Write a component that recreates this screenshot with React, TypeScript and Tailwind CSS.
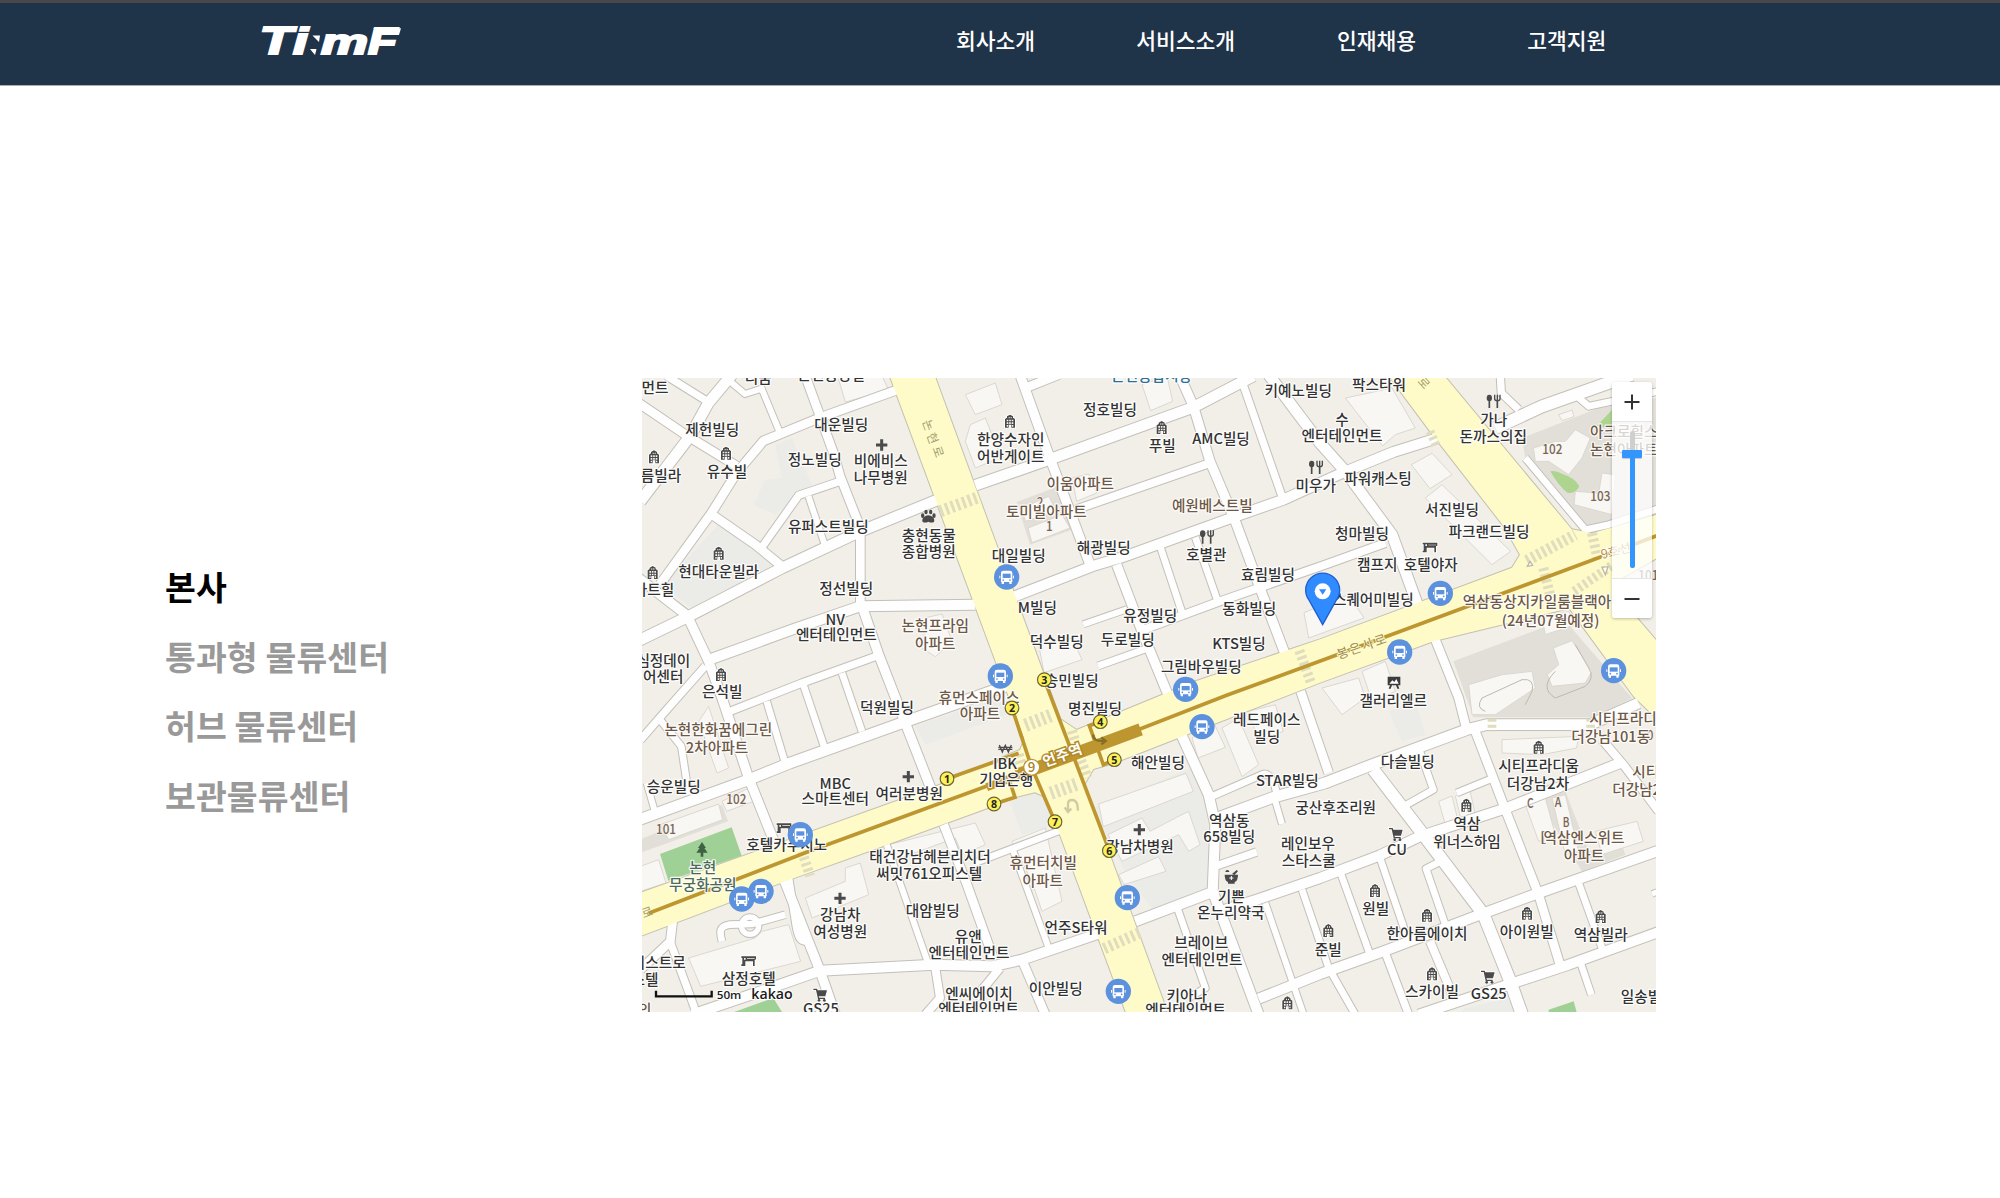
import React from "react";

const NAV = ["회사소개", "서비스소개", "인재채용", "고객지원"];
const NAV_GAPS = ["", "ml-[101px]", "ml-[102px]", "ml-[111px]"];
const PLACES = ["본사", "통과형 물류센터", "허브 물류센터", "보관물류센터"];

const KR = '"Noto Sans CJK KR", "Noto Sans", sans-serif';

// Side streets: [path, width]
const STREETS: [string, number][] = [
  ["M-10 75L130 170L284 264", 26],
  ["M74 -6L199 72", 22],
  ["M270 -10L199 75L144 175L-5 370", 32],
  ["M264 10L309 48L359 32L414 165", 18],
  ["M490 -6L534 114L574 224L594 294L655 450L655 680", 26],
  ["M770 34L534 119L364 189L284 284L209 404L54 619", 26],
  ["M594 310L470 352L358 510", 22],
  ["M499 354L548 500", 18],
  ["M209 409L340 500L420 565", 26],
  ["M-10 788L140 715L420 570L655 460L890 364", 32],
  ["M1000 322L1224 244L1654 88L1834 -6", 32],
  ["M-10 600L135 712L200 850L240 960L320 1200L424 1460", 28],
  ["M424 1500L534 1778L580 1910", 28],
  ["M190 864L54 1018L-5 1086", 22],
  ["M50 1020L118 1105L140 1250", 20],
  ["M199 846L450 755L654 685L1000 680", 30],
  ["M660 684L710 830L784 1020L868 1235", 28],
  ["M905 1340L975 1520L1054 1740", 26],
  ["M710 832L480 915L264 1000", 22],
  ["M374 970L428 1150", 20],
  ["M484 920L548 1110", 20],
  ["M600 885L660 1060", 20],
  ["M1090 925L794 1030L444 1155L320 1205L-5 1324", 32],
  ["M14 1215L40 1305", 18],
  ["M92 1630L85 1690L-5 1775", 26],
  ["M84 1690L165 1910", 22],
  ["M150 1910L370 1835L534 1778L874 1760L1050 1765L1140 1745L1390 1660", 30],
  ["M1480 1630L1704 1545", 30],
  ["M1734 1600L1844 1565L2034 1500L2214 1432L2334 1375L2594 1290L2934 1155", 30],
  ["M880 1770L894 1860L850 1910", 24],
  ["M240 1690C232 1660 232 1645 262 1640L330 1638L430 1610", 20],
  ["M440 1500L462 1640C470 1690 480 1690 500 1690", 22],
  ["M734 1400L858 1755", 18],
  ["M1000 1454L1274 1350", 20],
  ["M1114 1420L1220 1710", 18],
  ["M1144 1755L1210 1910", 26],
  ["M1074 1770L1000 1860", 24],
  ["M1618 1070L1700 1250L1720 1340L1712 1540L1850 1910", 30],
  ["M1704 1258L1864 1188Q1890 1184 1904 1245", 20],
  ["M1726 1320L1894 1258L2049 1215L2190 1160L2474 1055L2534 1040L2844 1040L2990 975", 32],
  ["M1900 1270L1920 1338", 18],
  ["M1720 1465L1844 1422", 22],
  ["M1606 1590L1690 1830L1640 1860", 20],
  ["M1870 1575L1985 1910", 18],
  ["M1980 1535L2060 1770L2140 1910", 20],
  ["M1850 1862L2034 1788L2224 1720L2500 1615L2690 1545L3050 1418", 30],
  ["M1976 940L2060 1185", 26],
  ["M2374 770L2450 960L2474 1055", 26],
  ["M2500 1060L2590 1295L2690 1550L2754 1760", 26],
  ["M2194 1175L2344 1370L2524 1608L2604 1808L2640 1910", 36],
  ["M2330 1110L2374 1235L2294 1280", 20],
  ["M2444 1245L2554 1200", 20],
  ["M2094 1480L2184 1730", 20],
  ["M2230 1725L2300 1910", 22],
  ["M2214 1440L2296 1680", 20],
  ["M2396 1450L2352 1472L2410 1640", 20],
  ["M2364 1690L2440 1870", 24],
  ["M2330 1910L2614 1815L2780 1760L3050 1662", 30],
  ["M2810 1515L2880 1710", 20],
  ["M2816 1755L2848 1850", 20],
  ["M2880 1085L2944 1160L3050 1300", 24],
  ["M3030 1548L3050 1540", 16],
  ["M1134 -10L1220 230L1344 560", 28],
  ["M1150 30L1250 -10", 26],
  ["M1110 658L1350 565L1440 538L1754 425L1924 365L2100 285L2254 222L2400 176", 30],
  ["M1300 395L1704 255", 24],
  ["M1614 -6L1654 84L1704 250L1780 430L1854 630L1930 830", 28],
  ["M1800 10L1920 355", 22],
  ["M1880 -10L2034 195L2110 280L2250 470L2330 690", 32],
  ["M1424 560L1504 770L1580 955", 28],
  ["M1324 739L1454 694", 18],
  ["M1368 864L1514 812", 20],
  ["M1554 504L1624 715", 20],
  ["M1660 478L1728 672", 20],
  ["M1504 755L1734 670L2049 560L2230 495", 24],
  ["M2560 150L2700 85L2870 25L2970 -10", 36],
  ["M2575 -6L2578 45L2630 95", 22],
  ["M2800 50L2840 85L3050 40", 20],
  ["M2650 240L2830 455L2900 440L3050 392", 20],
];

// Arterial roads, outlined and filled separately so that crossings merge
const ARTERIES = [
  "M744 -4L1454 1910H1579L879 -4Z",
  "M-9 1546L864 1233L1104 1128L1134 1116L1149 1081L1259 1026L1304 1056L1654 912L2034 784L2610 569L2634 530L2600 470L2789 454L2850 466L3052 408V536L2784 690L2374 790L2034 914L1614 1078L1414 1156L1354 1173L1329 1216L1225 1296L1204 1254L1179 1243L1124 1256L1029 1293L714 1408L434 1508L-9 1676Z",
  "M2242 -4L2364 160L2632 505L2784 694L2974 954L3052 1030V798L2954 684L2820 480L2789 454L2409 -4Z",
];

const BUILDINGS = [
  "M590 5L610 72L740 36L720 -6L600 -6Z",
  "M970 50L1060 15L1080 80L1000 110Z",
  "M985 140L1030 120L1070 220L1050 250L1000 270L970 190Z",
  "M1500 20L1575 -6L1592 70L1526 98Z",
  "M1290 300L1340 288L1364 345L1304 370Z",
  "M1140 390L1220 355L1244 400L1150 430Z",
  "M1158 450L1260 410L1284 450L1170 494Z",
  "M855 718L900 708L930 790L880 836L840 810Z",
  "M1190 800L1290 780L1320 845L1206 884Z",
  "M1986 704L2120 650L2166 720L2000 780Z",
  "M2110 60L2250 30L2320 150L2260 170L2222 204Z",
  "M2308 260L2370 226L2430 290L2364 332Z",
  "M2350 360L2400 320L2606 520L2550 560Z",
  "M2674 210L2740 190L2770 190L2800 155L2845 180L2820 240L2780 290L2720 250L2680 250Z",
  "M2800 340L2870 345L2880 285L2920 290L2910 410L2796 380Z",
  "M2750 110L2790 96L2796 116L2760 128Z",
  "M1370 1278L1632 1186L1654 1240L1384 1346Z",
  "M1398 1370L1500 1320L1524 1360L1604 1318L1640 1300L1674 1400L1640 1420L1610 1370L1440 1450Z",
  "M1430 1490L1550 1436L1572 1480L1446 1520Z",
  "M1650 1080L1716 1036L1750 1108L1668 1140Z",
  "M1740 1050L1790 1020L1850 1160L1800 1196Z",
  "M1820 1000L1900 980L1924 1060L1850 1090Z",
  "M140 1740L340 1680L360 1660L440 1640L476 1750L176 1825Z",
  "M490 1560L610 1510L610 1470L655 1455L680 1550L510 1620Z",
  "M55 1340L230 1278L242 1325L80 1385Z",
  "M200 985L260 1170L225 1185L170 1030Z",
  "M240 1270L320 1230L334 1270L254 1300Z",
  "M-5 1465L50 1445L72 1515L-5 1540Z",
  "M740 1400L1000 1335L1030 1400L960 1430L940 1380L750 1450Z",
  "M1110 1390L1210 1350L1260 1570L1200 1600L1180 1540L1150 1470Z",
  "M2580 1085L2810 1075L2804 1110L2700 1130L2580 1125Z",
  "M2390 1270L2430 1254L2446 1320L2410 1340Z",
  "M2440 1254L2484 1238L2500 1310L2456 1320Z",
  "M2650 1280L2710 1260L2740 1370L2690 1390Z",
  "M2730 1260L2770 1250L2810 1420L2770 1430Z",
  "M2860 1360L2985 1330L3004 1390L2880 1430Z",
  "M2160 880L2230 850L2260 940L2190 970Z",
  "M2040 930L2150 900L2170 960L2100 1010Z",
  "M2480 920L2580 890L2670 880L2680 930L2560 1010L2490 1010Z",
  "M2734 810L2790 788L2850 880L2830 915L2730 925L2716 890L2750 860Z",
  "M2700 720L2780 700L2800 740L2710 770Z",
];

type Tone = "k" | "b" | "g" | "t";
const TONES: Record<Tone, string> = { k: "#333333", b: "#6e5846", g: "#4c6a55", t: "#2f6f93" };

// Centred place names: [x, y, text, tone]
const LABELS: [number, number, string, Tone?][] = [
  [39, 29, "먼트"], [349, 0, "리움"], [568, -11, "논현중앙빌"],
  [211, 154, "제헌빌딩"], [255, 280, "유수빌"], [57, 292, "름빌라"],
  [598, 140, "대운빌딩"], [518, 245, "정노빌딩"],
  [716, 249, "비에비스"], [716, 299, "나무병원"],
  [559, 447, "유퍼스트빌딩"], [860, 472, "충현동물"], [860, 522, "종합병원"],
  [230, 581, "현대타운빌라"], [36, 636, "아트힐"], [613, 631, "정선빌딩"],
  [580, 726, "NV"], [583, 770, "엔터테인먼트"],
  [880, 744, "논현프라임", "b"], [880, 796, "아파트", "b"],
  [64, 849, "심정데이"], [64, 896, "어센터"], [241, 942, "은석빌"],
  [1529, -6, "논현종합시장", "t"], [1404, 95, "정호빌딩"], [1561, 204, "푸빌"],
  [1737, 183, "AMC빌딩"], [1969, 39, "키예노빌딩"],
  [1106, 184, "한양수자인"], [1106, 236, "어반게이트"],
  [1315, 318, "이움아파트", "b"], [1213, 400, "토미빌아파트", "b"],
  [1711, 383, "예원베스트빌", "b"], [1385, 509, "해광빌딩"], [1130, 532, "대일빌딩"],
  [1693, 531, "호별관"], [1878, 589, "효림빌딩"], [1186, 688, "M빌딩"],
  [1525, 713, "유정빌딩"], [1822, 691, "동화빌딩"], [1244, 790, "덕수빌딩"],
  [1457, 786, "두로빌딩"], [1791, 798, "KTS빌딩"], [1678, 866, "그림바우빌딩"],
  [1289, 908, "승민빌딩"], [2021, 322, "미우가"],
  [2211, 21, "팍스타워"], [2100, 124, "수"], [2100, 174, "엔터테인먼트"],
  [2555, 124, "가나"], [2554, 176, "돈까스의집"],
  [2945, 162, "아크로힐스", "b"], [2945, 214, "논현아파트", "b"],
  [2208, 302, "파워캐스팅"], [2430, 395, "서진빌딩"], [2541, 462, "파크랜드빌딩"],
  [2160, 466, "청마빌딩"], [2206, 559, "캠프지"], [2366, 561, "호텔야자"],
  [2194, 664, "스퀘어미빌딩"], [2685, 672, "역삼동상지카일룸블랙아", "b"],
  [2726, 729, "(24년07월예정)", "b"], [2254, 968, "갤러리엘르"],
  [229, 1056, "논현한화꿈에그린", "b"], [225, 1108, "2차아파트", "b"],
  [735, 990, "덕원빌딩"], [95, 1226, "승운빌딩"],
  [580, 1216, "MBC"], [580, 1262, "스마트센터"], [802, 1246, "여러분병원"],
  [182, 1469, "논현", "g"], [182, 1520, "무궁화공원", "g"], [434, 1401, "호텔카푸치노"],
  [864, 1436, "태건강남헤븐리치더"], [862, 1486, "써밋761오피스텔"], [872, 1599, "대암빌딩"],
  [595, 1610, "강남차"], [595, 1660, "여성병원"],
  [979, 1676, "유앤"], [981, 1724, "엔터테인먼트"],
  [50, 1754, "이스트로"], [9, 1804, "스텔"], [320, 1801, "삼정호텔"],
  [537, 1893, "GS25"], [8, 1896, "의", "b"],
  [1011, 1846, "엔씨에이치"], [1010, 1893, "엔터테인먼트"],
  [1011, 960, "휴먼스페이스", "b"], [1014, 1008, "아파트", "b"],
  [1359, 991, "명진빌딩"], [1874, 1025, "레드페이스"], [1874, 1075, "빌딩"],
  [1089, 1158, "IBK"], [1093, 1205, "기업은행"], [1548, 1154, "해안빌딩"],
  [1936, 1208, "STAR빌딩"], [2081, 1288, "궁산후조리원"],
  [1762, 1327, "역삼동"], [1762, 1375, "658빌딩"],
  [1998, 1398, "레인보우"], [2000, 1447, "스타스쿨"], [1494, 1405, "강남차병원"],
  [1204, 1455, "휴먼터치빌", "b"], [1202, 1508, "아파트", "b"],
  [1768, 1555, "기쁜"], [1766, 1604, "온누리약국"], [1302, 1649, "언주S타워"],
  [1678, 1695, "브레이브"], [1680, 1745, "엔터테인먼트"], [1241, 1831, "이안빌딩"],
  [1634, 1853, "키아나"], [1631, 1896, "엔터테인먼트"], [2059, 1716, "준빌"],
  [2963, 1022, "시티프라디움", "b"], [2906, 1076, "더강남101동", "b"],
  [2297, 1151, "다슬빌딩"], [2690, 1162, "시티프라디움"], [2688, 1216, "더강남2차"],
  [3092, 1182, "시티프라디움", "b"], [3004, 1235, "더강남2차", "b"],
  [2475, 1337, "역삼"], [2475, 1390, "위너스하임"],
  [2826, 1378, "역삼엔스위트", "b"], [2826, 1432, "아파트", "b"],
  [2265, 1416, "CU"], [2201, 1591, "원빌"], [2355, 1668, "한아름에이치"],
  [2654, 1661, "아이원빌"], [2876, 1670, "역삼빌라"], [2370, 1842, "스카이빌"],
  [2540, 1848, "GS25"], [3017, 1856, "일송빌딩"],
];

// House and block numbers
const NUMBERS: [number, number, string][] = [
  [1194, 372, "2"], [1222, 444, "1"], [2731, 213, "102"], [2875, 353, "103"],
  [3019, 591, "101"], [283, 1263, "102"], [72, 1353, "101"],
  [2665, 1276, "C"], [2748, 1271, "A"], [2772, 1333, "B"], [2703, 1378, "["], [3024, 1072, "0"],
];

const APARTMENTS: [number, number][] = [
  [252, 226], [36, 237], [230, 526], [32, 584], [237, 890], [1559, 149], [1104, 130],
  [2690, 1108], [2473, 1282], [2199, 1538], [2355, 1612], [2655, 1606], [2876, 1616],
  [2370, 1788], [2059, 1658], [1936, 1875],
];
const HOSPITALS: [number, number][] = [[719, 201], [799, 1196], [594, 1561], [1492, 1355]];
const FOODS: [number, number][] = [[1694, 477], [2021, 268], [2554, 70]];
const HOTELS: [number, number][] = [[2364, 509], [426, 1351], [320, 1750]];
const SHOPS: [number, number][] = [[535, 1850], [2262, 1368], [2538, 1796]];
const BUSES: [number, number][] = [
  [1094, 597], [1075, 894], [1631, 934], [2395, 646], [2273, 822], [2915, 878],
  [475, 1370], [299, 1563], [357, 1540], [1680, 1046], [1456, 1559], [1429, 1840],
];
const EXITS: [number, number, number][] = [
  [915, 1202, 1], [1110, 990, 2], [1207, 905, 3], [1375, 1031, 4],
  [1417, 1145, 5], [1402, 1418, 6], [1239, 1331, 7], [1056, 1278, 8],
];
// Pedestrian crossings: start, end, stripe length
const CROSSINGS: [number, number, number, number, number][] = [
  [894, 400, 1014, 356, 36], [1150, 1042, 1232, 1010, 40], [1226, 1246, 1310, 1216, 40],
  [1386, 1712, 1494, 1664, 34], [2654, 548, 2800, 470, 34], [2796, 640, 2910, 562, 28],
  [1972, 818, 2008, 918, 30], [2704, 570, 2724, 650, 30], [2850, 465, 2866, 540, 30],
  [480, 1420, 504, 1494, 30], [2364, 160, 2384, 206, 26], [1290, 1058, 1300, 1090, 30], [1316, 1148, 1336, 1200, 32],
  [1128, 1130, 1144, 1180, 34], [2550, 1022, 2550, 1060, 26], [2846, 1022, 2846, 1060, 26],
];

function Apartment({ x, y }: { x: number; y: number }) {
  return (
    <g transform={`translate(${x} ${y})`}>
      <path d="M-15 19V-7L-9 -11V-15L0 -20L9 -15V-11L15 -7V19H4V10H-4V19Z" fill="#4a4a4a" stroke="#fff" strokeWidth="5" paintOrder="stroke" />
      <path d="M-10 -5h5v5h-5zM-2.5 -5h5v5h-5zM5 -5h5v5h-5zM-10 3h5v5h-5zM5 3h5v5h-5zM-2.5 3h5v5h-5zM-10 11h4v5h-4zM6 11h4v5h-4zM-4 -13h3v4h-3zM2 -13h3v4h-3z" fill="#f4f2ee" />
    </g>
  );
}

function Hotel({ x, y }: { x: number; y: number }) {
  return (
    <g transform={`translate(${x} ${y})`} fill="#4a4a4a">
      <path d="M-22 -15H22V-6L18 -4V14H13V0H-10V14H-22V9H-19V-10H-22Z" stroke="#fff" strokeWidth="5" paintOrder="stroke" />
      <path d="M-14 -10H-9V-5H-14ZM-5 -9H18V-7H-5Z" fill="#f4f2ee" />
    </g>
  );
}

function Food({ x, y }: { x: number; y: number }) {
  return (
    <g transform={`translate(${x} ${y})`} fill="none" stroke="#4a4a4a" strokeWidth="5">
      <ellipse cx="-12" cy="-10" rx="8" ry="10" fill="#4a4a4a" stroke="none" />
      <path d="M-12 -2V20M12 -2V20" />
      <path d="M4 -20V-8Q4 -2 12 -2Q20 -2 20 -8V-20M12 -20V-4" strokeWidth="4" />
    </g>
  );
}

function Shop({ x, y }: { x: number; y: number }) {
  return (
    <g transform={`translate(${x} ${y})`} fill="#4a4a4a">
      <path d="M-21 -18H-10L-8 -13H20L15 5H-5L-3 9H14V13H-7L-13 -14H-21Z" stroke="#fff" strokeWidth="5" paintOrder="stroke" />
      <circle cx="-4" cy="17" r="4" />
      <circle cx="12" cy="17" r="4" />
    </g>
  );
}

function Bus({ x, y }: { x: number; y: number }) {
  return (
    <g transform={`translate(${x} ${y})`}>
      <circle r="38" fill="#5c91de" />
      <path d="M-17 -12Q-17 -19 -10 -19H10Q17 -19 17 -12V15H15V21H8V15H-8V21H-15V15H-17Z" fill="#fff" />
      <path d="M-12 -10H12V3H-12Z" fill="#5c91de" />
      <circle cx="-10" cy="9" r="2.6" fill="#5c91de" />
      <circle cx="10" cy="9" r="2.6" fill="#5c91de" />
      <path d="M-20.500 -4V4M20.500 -4V4" stroke="#fff" strokeWidth="3" />
    </g>
  );
}

function OfficeMap() {
  return (
    <svg viewBox="0 0 3042 1902" width="1014" height="634" className="block" fontFamily={KR}>
      <rect width="3042" height="1902" fill="#f2efe9" />

      <g fill="#ebece7">
        <path d="M400 200L450 180L510 320L400 410L335 380L370 305L420 300Z" />
        <path d="M60 620L230 440L410 560L160 700Z" />
        <path d="M820 1045L1090 950L1120 1000L850 1100Z" />
        <path d="M1350 1290L1650 1170L1700 1300L1700 1530L1530 1590L1460 1500Z" />
        <path d="M1100 1260L1190 1240L1240 1340L1140 1370Z" />
        <path d="M2240 1000L2320 970L2350 1070L2280 1090Z" />
        <path d="M2470 1890L2600 1860L2620 1910H2450Z" />
      </g>
      <g fill="#e2dfd8">
        <path d="M2640 180L2870 90L3042 60V400L2900 440L2830 450L2650 240Z" />
        <path d="M2434 850L2700 750L2784 745L2970 960L2860 1018L2494 1018Z" />
        <path d="M-6 1385L240 1280L258 1330L-6 1425Z" />
        <path d="M1124 372L1250 325L1290 455L1164 500Z" />
        <path d="M2690 1270L2770 1240L2840 1420L2940 1400L2950 1430L2820 1480Z" />
      </g>
      <path d="M2725 280Q2740 276 2762 288Q2800 300 2812 325Q2800 350 2776 344Q2750 325 2725 280ZM2864 145L2910 95V150Z" fill="#add58f" />
      <path d="M54 1428L269 1348L299 1433L79 1508ZM254 1910L394 1860L425 1910ZM2720 1895L2795 1870L2806 1910H2720Z" fill="#9fd196" />

      <g fill="#f8f7f4" stroke="#dcd8d0" strokeWidth="3">
        {BUILDINGS.map((d) => <path key={d} d={d} />)}
      </g>
      <path d="M2530 1000Q2500 990 2520 960L2640 905Q2680 900 2670 940L2650 980" fill="none" stroke="#bdb9b1" strokeWidth="3" />
      <path d="M2740 880Q2690 930 2740 960L2830 925Q2860 900 2840 870L2800 800" fill="none" stroke="#bdb9b1" strokeWidth="3" />

      <g fill="none" stroke="#c3c0b9" strokeLinejoin="round">
        {STREETS.map(([d, w]) => <path key={d} d={d} strokeWidth={w + 6} />)}
        <circle cx="324" cy="1643" r="26" strokeWidth="22" />
      </g>
      <g fill="none" stroke="#c3c0b0" strokeWidth="6" strokeLinejoin="round">
        {ARTERIES.map((d) => <path key={d} d={d} />)}
      </g>
      <g fill="none" stroke="#fefefe" strokeLinejoin="round">
        {STREETS.map(([d, w]) => <path key={d} d={d} strokeWidth={w} />)}
        <circle cx="324" cy="1643" r="26" strokeWidth="16" />
      </g>
      <g fill="#fefbc9">
        {ARTERIES.map((d) => <path key={d} d={d} />)}
      </g>

      <g fill="none" stroke="#e0dcbe">
        {CROSSINGS.map(([x1, y1, x2, y2, w]) => (
          <line key={`${x1}-${y1}`} x1={x1} y1={y1} x2={x2} y2={y2} strokeWidth={w} strokeDasharray="9 9" />
        ))}
      </g>
      <g fill="#fff" stroke="#bdb9a8" strokeWidth="4">
        <path d="M2656 565L2664 550L2672 562ZM2880 568L2898 566L2890 590Z" />
      </g>
      <path d="M1278 1300V1278Q1278 1266 1290 1266Q1302 1266 1306 1280L1308 1298M1268 1288L1278 1302L1288 1292" fill="none" stroke="#d0cba4" strokeWidth="7" />

      <g fill="none" stroke="#bd962f" strokeWidth="11">
        <path d="M20 1606L494 1423L1029 1226L1494 1053L1754 952L2049 844L2884 534L3052 470" />
        <path d="M915 1202L1130 1126" />
        <path d="M1110 990L1169 1168L1239 1331" />
        <path d="M1207 905L1402 1418" />
        <path d="M1375 1031L1342 1043L1384 1160L1417 1145" />
        <path d="M1056 1278L1119 1258L1100 1200" />
        <path d="M1034 1228L1494 1053" strokeWidth="24" />
        <path d="M1124 1192L1496 1054" strokeWidth="38" />
      </g>
      <path d="M1354 1070Q1352 1092 1388 1088M1378 1078L1391 1089L1378 1099" fill="none" stroke="#846f28" strokeWidth="7" />

      <g fill="#a39e6e" fontSize="36" textAnchor="middle">
        <text transform="translate(850 145) rotate(70)" y="4">논</text>
        <text transform="translate(863 184) rotate(70)" y="4">현</text>
        <text transform="translate(880 224) rotate(70)" y="4">로</text>
        <text transform="translate(2342 18) rotate(48)" y="8">로</text>
        <text transform="translate(16 1604) rotate(-20)" y="12">로</text>
      </g>
      <text transform="translate(2159 806) rotate(-19)" y="13" fontSize="38" textAnchor="middle" textLength="154" fill="#9c8a50" stroke="#fefbc9" strokeWidth="5" paintOrder="stroke">봉은사로</text>
      <text transform="translate(2922 520) rotate(-14)" y="12" fontSize="38" textAnchor="middle" fill="#b98f31" stroke="#fff" strokeWidth="6" paintOrder="stroke">9호선</text>

      {APARTMENTS.map(([x, y]) => <Apartment key={`${x}-${y}`} x={x} y={y} />)}
      {HOTELS.map(([x, y]) => <Hotel key={`${x}-${y}`} x={x} y={y} />)}
      {FOODS.map(([x, y]) => <Food key={`${x}-${y}`} x={x} y={y} />)}
      {SHOPS.map(([x, y]) => <Shop key={`${x}-${y}`} x={x} y={y} />)}
      {HOSPITALS.map(([x, y]) => (
        <path key={`${x}-${y}`} d={`M${x - 17} ${y}H${x + 17}M${x} ${y - 17}V${y + 17}`} stroke="#4a4a4a" strokeWidth="9" />
      ))}
      <g fill="#4a4a4a">
        <path d="M859 412C872 412 880 424 876 432Q868 436 859 431Q850 436 842 432C838 424 846 412 859 412Z" />
        <ellipse cx="842" cy="413" rx="5" ry="7" />
        <ellipse cx="852" cy="402" rx="5" ry="7" />
        <ellipse cx="866" cy="402" rx="5" ry="7" />
        <ellipse cx="876" cy="413" rx="5" ry="7" />
      </g>
      <path d="M1072 1101L1081 1122L1090 1102L1099 1122L1108 1101M1069 1108H1111M1069 1114H1111" fill="none" stroke="#4a4a4a" strokeWidth="4" />
      <path d="M1748 1490H1788Q1788 1508 1778 1512V1517H1758V1512Q1748 1508 1748 1490ZM1770 1488L1784 1476L1788 1480L1778 1490ZM1750 1482A6 6 0 0 1 1762 1482Z" fill="#4a4a4a" />
      <path d="M1762 1500H1774M1768 1494V1506" stroke="#fff" strokeWidth="3" />
      <path d="M2237 896H2275V922H2237ZM2244 922H2250L2246 932H2240ZM2262 922H2268L2272 932H2266Z" fill="#3c3c3c" />
      <path d="M2242 917L2251 907L2257 912L2263 903L2270 917Z" fill="#fff" />
      <path d="M180 1392L192 1410H187L197 1424H184V1436H176V1424H163L173 1410H168Z" fill="#3f6144" />

      <g fontSize="41" fontWeight="500" textAnchor="middle" fill="#7a6656" stroke="#f7f5f0" strokeWidth="5" paintOrder="stroke">
        {NUMBERS.map(([x, y, t]) => <text key={`${x}-${y}`} x={x} y={y + 15} textLength={t.length * 20} lengthAdjust="spacingAndGlyphs">{t}</text>)}
      </g>
      <g fontSize="44" fontWeight="500" textAnchor="middle" stroke="#ffffff" strokeOpacity="0.9" strokeWidth="7" strokeLinejoin="round" paintOrder="stroke">
        {LABELS.map(([x, y, t, c]) => <text key={`${x}-${y}`} x={x} y={y + 16} fill={TONES[c ?? "k"]}>{t}</text>)}
      </g>

      {BUSES.map(([x, y]) => <Bus key={`${x}-${y}`} x={x} y={y} />)}
      {EXITS.map(([x, y, n]) => (
        <g key={n}>
          <circle cx={x} cy={y} r="20.500" fill="#fdf155" stroke="#6b6535" strokeWidth="3.500" />
          <text x={x} y={y + 11.500} fontSize="32" fontWeight="700" textAnchor="middle" fill="#222" fontFamily='"Open Sans", sans-serif'>{n}</text>
        </g>
      ))}
      <circle cx="1169" cy="1168" r="24" fill="#fff" stroke="#bd962f" strokeWidth="4" />
      <text x="1169" y="1183" fontSize="40" fontWeight="500" textAnchor="middle" fill="#a98426">9</text>
      <text transform="translate(1261 1131) rotate(-20)" y="16" fontSize="43" fontWeight="700" textAnchor="middle" textLength="122" fill="#fff" stroke="#b08a2a" strokeWidth="9" paintOrder="stroke">언주역</text>

      <path d="M2042 740L2002 668A51 51 0 1 1 2082 668Z" fill="#2f8bff" stroke="#1f5fd0" strokeWidth="4" />
      <circle cx="2042" cy="640" r="24" fill="#fff" />
      <path d="M2031 634H2053L2042 650Z" fill="#2f8bff" />

      <path d="M42 1838V1855H209V1838" fill="none" stroke="#111" strokeWidth="7" />
      <g fontFamily='"Open Sans", sans-serif' fontWeight="600" fill="#1c1c1c" stroke="#fff" strokeWidth="6" paintOrder="stroke">
        <text x="224" y="1864" fontSize="34" textLength="74" lengthAdjust="spacingAndGlyphs">50m</text>
        <text x="328" y="1864" fontSize="44" textLength="124" lengthAdjust="spacingAndGlyphs">kakao</text>
      </g>
    </svg>
  );
}

function ZoomControl() {
  return (
    <div className="absolute right-[4px] top-[4px] flex h-[236px] w-10 flex-col overflow-hidden rounded-[3px] shadow-[0_1px_3px_rgba(0,0,0,0.25)]">
      <button className="flex h-10 items-center justify-center border-b border-[#e6e6e6] bg-white" aria-label="확대">
        <svg width="16" height="16" viewBox="0 0 16 16"><path d="M8 .5V15.5M.5 8H15.5" stroke="#333" strokeWidth="2" /></svg>
      </button>
      <div className="flex flex-1 flex-col items-center bg-white/75 pt-[9px]">
        <div className="h-[19px] w-[5px] rounded-t-full bg-[#cfcfcf]" />
        <div className="h-2 w-5 rounded-[1px] bg-[#3396ff] shadow-[0_1px_1px_rgba(0,0,0,0.2)]" />
        <div className="h-[110px] w-[5px] rounded-b-[2px] bg-[#3396ff]" />
      </div>
      <button className="flex h-10 items-center justify-center border-t border-[#e6e6e6] bg-white" aria-label="축소">
        <svg width="16" height="16" viewBox="0 0 16 16"><path d="M.5 8H15.5" stroke="#333" strokeWidth="2" /></svg>
      </button>
    </div>
  );
}

function Logo() {
  return (
    <svg width="142" height="32" viewBox="0 0 142 32" className="block" fill="#fff" stroke="#fff" strokeWidth="2" fontFamily='"Liberation Sans", Arial, sans-serif' fontWeight="700" fontStyle="italic">
      <text x="-1.500" y="29.300" fontSize="38.5" textLength="33" lengthAdjust="spacingAndGlyphs">T</text>
      <text x="32" y="29.300" fontSize="36.500" textLength="15" lengthAdjust="spacingAndGlyphs">i</text>
      <path d="M51.5 10.5H59L58 17ZM49 24H55.5L54 30Z" stroke="none" />
      <text x="60" y="29.300" fontSize="35" textLength="47" lengthAdjust="spacingAndGlyphs">m</text>
      <text x="107" y="29.300" fontSize="36" textLength="29" lengthAdjust="spacingAndGlyphs">F</text>
      <path d="M112 3.200H140L138 10H121Z" stroke="none" />
    </svg>
  );
}

export default function App() {
  return (
    <div className="h-[1198px] w-[2000px] overflow-hidden bg-white font-['Noto_Sans_CJK_KR','Noto_Sans',sans-serif]">
      <header className="flex h-[86px] items-start border-b border-t-[3px] border-b-[#a9adbd] border-t-[#48484a] bg-[#1f3349] pl-[261px]">
        <div className="mt-[22px] w-[142px]"><Logo /></div>
        <nav className="ml-[553px] mt-[21px] flex h-8 items-center text-[21.5px] font-medium text-white">
          {NAV.map((item, i) => <a key={item} href="#" className={`whitespace-nowrap leading-8 ${NAV_GAPS[i]}`}>{item}</a>)}
        </nav>
      </header>
      <main className="flex pt-[292px]">
        <ul className="w-[642px] shrink-0 pl-[165px] pt-[173px] text-[33.5px] font-bold leading-[69.700px] tracking-[0.1px] text-[#999]">
          {PLACES.map((p, i) => (
            <li key={p} className={i === 0 ? "text-black" : ""}>{p}</li>
          ))}
        </ul>
        <section className="relative h-[634px] w-[1014px] overflow-hidden">
          <OfficeMap />
          <ZoomControl />
        </section>
      </main>
    </div>
  );
}
